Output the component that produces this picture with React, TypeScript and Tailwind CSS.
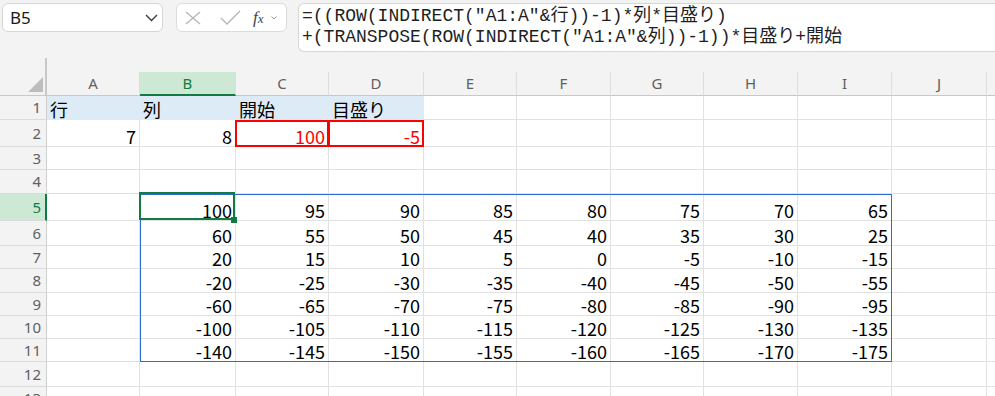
import React from "react";

const cols = [
  { name: "A", w: "w-[93px]" },
  { name: "B", w: "w-[96px]" },
  { name: "C", w: "w-[93px]" },
  { name: "D", w: "w-[95px]" },
  { name: "E", w: "w-[93px]" },
  { name: "F", w: "w-[94px]" },
  { name: "G", w: "w-[93px]" },
  { name: "H", w: "w-[94px]" },
  { name: "I", w: "w-[94px]" },
  { name: "J", w: "w-[95px]" },
];

const rowHeights = [
  "h-[24px]",
  "h-[27px]",
  "h-[23px]",
  "h-[24px]",
  "h-[27px]",
  "h-[25px]",
  "h-[23px]",
  "h-[24px]",
  "h-[23px]",
  "h-[23px]",
  "h-[23px]",
  "h-[25px]",
  "h-[24px]",
];

type Cell = { v: string; left?: boolean; fill?: boolean; red?: boolean; sel?: boolean };

const getCell = (r: number, c: number): Cell | null => {
  if (r === 1) {
    const labels = ["行", "列", "開始", "目盛り"];
    if (c < 4) return { v: labels[c], left: true, fill: true };
    return null;
  }
  if (r === 2) {
    if (c === 0) return { v: "7" };
    if (c === 1) return { v: "8" };
    if (c === 2) return { v: "100", red: true };
    if (c === 3) return { v: "-5", red: true };
    return null;
  }
  if (r >= 5 && r <= 11 && c >= 1 && c <= 8) {
    const val = 100 + (r - 5) * -40 + (c - 1) * -5;
    return { v: String(val), sel: r === 5 && c === 1 };
  }
  return null;
};

const App = () => {
  return (
    <div className="w-[995px] h-[396px] overflow-hidden bg-white">
      {/* formula bar */}
      <div className="h-[58px] bg-[#f3f3f3] flex items-start pt-[3px] pl-[2px]">
        <div className="w-[161px] h-[29px] shrink-0 rounded-[6px] border border-[#d6d6d6] bg-white flex items-center justify-between pl-[7px] pr-[4px]">
          <span className="font-['Noto_Sans',sans-serif] text-[17px] text-[#1b1b1b] leading-none">B5</span>
          <svg width="13" height="8" viewBox="0 0 13 8">
            <polyline points="1,1 6.5,6.5 12,1" fill="none" stroke="#3a3a3a" strokeWidth="1.4" />
          </svg>
        </div>
        <div className="ml-[13px] w-[111px] h-[29px] shrink-0 rounded-[6px] border border-[#dcdcdc] bg-white flex items-center pl-[8px]">
          <svg width="16" height="14" viewBox="0 0 16 14">
            <line x1="1" y1="1" x2="15" y2="13" stroke="#b4b4b4" strokeWidth="1.3" />
            <line x1="15" y1="1" x2="1" y2="13" stroke="#b4b4b4" strokeWidth="1.3" />
          </svg>
          <svg className="ml-[19px]" width="21" height="15" viewBox="0 0 21 15">
            <polyline points="1,8 7,14 20,1" fill="none" stroke="#b4b4b4" strokeWidth="1.3" />
          </svg>
          <span className="ml-[12px] font-['Liberation_Serif',serif] italic text-[17px] leading-none text-[#444]">
            f<span className="text-[13px]">x</span>
          </span>
          <svg className="ml-[7px]" width="6" height="4" viewBox="0 0 6 4">
            <polyline points="0.5,0.5 3,3 5.5,0.5" fill="none" stroke="#9a9a9a" strokeWidth="1" />
          </svg>
        </div>
        <div className="ml-[11px] flex-1 h-[49px] rounded-l-[6px] border border-r-0 border-[#d6d6d6] bg-white pl-[3px] pt-[2px] font-['Liberation_Mono','Noto_Sans_CJK_JP',monospace] text-[18px] leading-[21px] text-[#1f1f1f] whitespace-nowrap">
          <div>=((ROW(INDIRECT("A1:A"&amp;行))-1)*列*目盛り)</div>
          <div>+(TRANSPOSE(ROW(INDIRECT("A1:A"&amp;列))-1))*目盛り+開始</div>
        </div>
      </div>

      {/* sheet */}
      <div className="relative">
        {/* column headers */}
        <div className="flex h-[38px] bg-[#f3f3f3]">
          <div className="relative w-[47px] shrink-0 border-r-2 border-b border-[#c8c8c8]">
            <svg className="absolute right-[2px] bottom-[3px]" width="15" height="15" viewBox="0 0 15 15">
              <polygon points="15,0 15,15 0,15" fill="#bdbdbd" />
            </svg>
          </div>
          {cols.map((c) => (
            <div key={c.name} className={`${c.w} shrink-0 flex flex-col justify-end`}>
              {c.name === "B" ? (
                <div className="h-[24px] bg-[#cde9d6] border-r border-[#dedede] border-b-2 border-b-[#107c41] flex items-center justify-center font-['Noto_Sans',sans-serif] text-[15px] text-[#107c41]">
                  {c.name}
                </div>
              ) : (
                <div className="h-[24px] border-r border-[#dedede] border-b border-b-[#c8c8c8] flex items-center justify-center font-['Noto_Sans',sans-serif] text-[15px] text-[#5f5f5f]">
                  {c.name}
                </div>
              )}
            </div>
          ))}
          <div className="flex-1 flex flex-col justify-end">
            <div className="h-[24px] border-b border-[#c8c8c8]"></div>
          </div>
        </div>

        {/* rows */}
        {rowHeights.map((h, i) => {
          const r = i + 1;
          return (
            <div key={r} className={`flex ${h}`}>
              {r === 5 ? (
                <div className="w-[47px] shrink-0 bg-[#cde9d6] border-r-2 border-r-[#107c41] border-b border-b-[#dcdcdc] flex items-center justify-end pr-[4px] font-['Noto_Sans',sans-serif] text-[15px] text-[#107c41]">
                  {r}
                </div>
              ) : (
                <div className="w-[47px] shrink-0 bg-[#f3f3f3] border-r border-r-[#cfcfcf] border-b border-b-[#dcdcdc] flex items-center justify-end pr-[5px] font-['Noto_Sans',sans-serif] text-[15px] text-[#5f5f5f]">
                  {r}
                </div>
              )}
              {cols.map((c, ci) => {
                const cell = getCell(r, ci);
                return (
                  <div
                    key={c.name}
                    className={`${c.w} shrink-0 relative flex items-end px-[3px] pb-px border-r border-b font-['Noto_Sans_CJK_JP','Noto_Sans',sans-serif] text-[18px] leading-[18px] ${
                      cell?.fill ? "bg-[#ddebf7] border-[#ddebf7]" : "border-[#e1e1e1]"
                    } ${cell?.left ? "justify-start" : "justify-end"} ${cell?.red ? "text-[#ff0000]" : "text-black"}`}
                  >
                    {cell?.v}
                    {cell?.red && (
                      <div className="absolute -left-px top-0 -right-px -bottom-px border-2 border-[#ff0000]"></div>
                    )}
                    {cell?.sel && (
                      <div className="absolute z-10 -left-px -top-[2px] right-0 bottom-0 border-2 border-[#107c41]">
                        <div className="absolute -right-[4px] -bottom-[5px] w-[6px] h-[6px] bg-[#107c41]"></div>
                      </div>
                    )}
                  </div>
                );
              })}
              <div className="flex-1 border-b border-[#e1e1e1]"></div>
            </div>
          );
        })}

        {/* selected range outline */}
        <div className="absolute left-[140px] top-[136px] w-[752px] h-[168px] border border-[#2d6dd2] pointer-events-none"></div>
      </div>
    </div>
  );
};

export default App;
